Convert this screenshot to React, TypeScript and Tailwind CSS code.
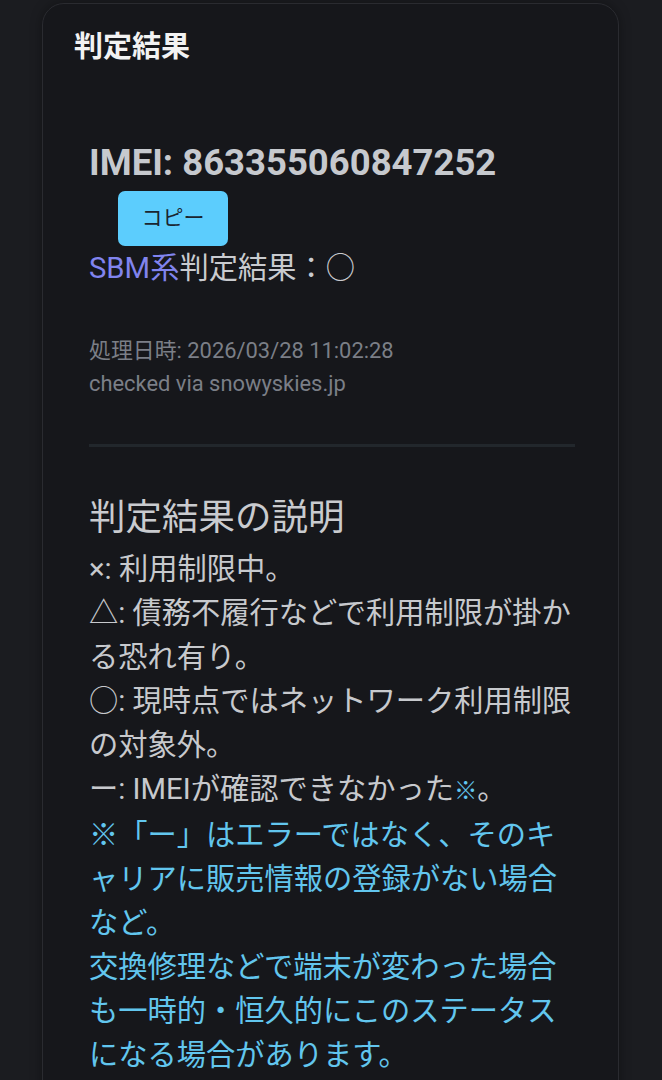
export default function App() {
  return (
    <div className="min-h-screen bg-[#1b1c20] pt-[3px] font-['Roboto','Noto_Sans_CJK_JP',sans-serif]">
      <div className="ml-[42px] w-[577px] rounded-t-[22px] border border-[#2a2b30] bg-[#16171b] px-[31px] pt-[21px] pb-10 shadow-[0_0_12px_rgba(0,0,0,0.35)]">
        <h1 className="text-[29px] leading-[44px] font-semibold text-[#f2f2f2]">判定結果</h1>

        <div className="mt-[72px] pr-[12px] pl-[15px]">
          <h2 className="text-[36.5px] leading-[44px] font-bold text-[#c6c9ce]">IMEI: 863355060847252</h2>
          <button className="mt-[6px] ml-[29px] flex h-[55px] w-[110px] items-center justify-center rounded-[7px] bg-[#5ccdfd] text-[21px] text-[#1a2530]">
            コピー
          </button>
          <p className="text-[29.25px] leading-[44px] text-[#c9cbcf]">
            <span className="text-[#8184ee]">SBM系</span>判定結果：○
          </p>

          <div className="mt-[44px] text-[21.9px] leading-[33px] text-[#7b7f87]">
            <p>処理日時: 2026/03/28 11:02:28</p>
            <p>checked via snowyskies.jp</p>
          </div>

          <hr className="mt-[44px] border-0 border-t-[3px] border-[#22272c]" />

          <h2 className="mt-[43px] text-[36.5px] leading-[55px] text-[#c9cbcf]">判定結果の説明</h2>
          <p className="mt-[2px] text-[29.25px] leading-[44px] text-[#c7c9cd] [line-break:loose]">
            ×: 利用制限中。
            <br />
            △: 債務不履行などで利用制限が掛かる恐れ有り。
            <br />
            ○: 現時点ではネットワーク利用制限の対象外。
            <br />
            ー: IMEIが確認できなかった<span className="text-[0.8em] text-[#62c6ee]">※</span>。
            <br />
            <span className="text-[#62c6ee]">
              ※「ー」はエラーではなく、そのキャリアに販売情報の登録がない場合など。
              <br />
              交換修理などで端末が変わった場合も一時的・恒久的にこのステータスになる場合があります。
            </span>
          </p>
        </div>
      </div>
    </div>
  )
}
